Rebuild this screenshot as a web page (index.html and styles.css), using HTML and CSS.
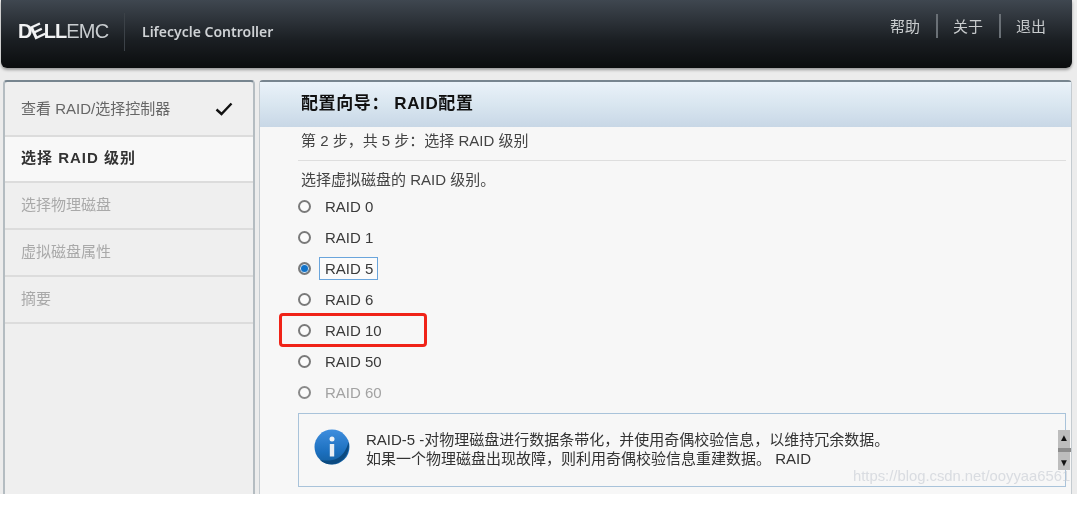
FILE: index.html
```html
<!DOCTYPE html>
<html lang="zh">
<head>
  <meta charset="UTF-8" />
  <title>Lifecycle Controller</title>
  <link rel="stylesheet" href="styles.css">
</head>
<body>
  <div class="screen">
    <header class="topbar">
      <div class="brand">
        <span class="logo"><b>D<i>E</i>LL</b>EMC</span>
        <span class="product">Lifecycle Controller</span>
      </div>
      <nav class="toplinks">
        <a>帮助</a>
        <a>关于</a>
        <a>退出</a>
      </nav>
    </header>

    <div class="main">
      <aside class="sidebar">
        <div class="step done">
          <span>查看 RAID/选择控制器</span>
          <svg class="check" width="18" height="14" viewBox="0 0 18 14"><path d="M1.5 7.5 L6.5 12 L16.5 1.5" fill="none" stroke="#111" stroke-width="2.4"/></svg>
        </div>
        <div class="step current">选择 RAID 级别</div>
        <div class="step">选择物理磁盘</div>
        <div class="step">虚拟磁盘属性</div>
        <div class="step">摘要</div>
      </aside>

      <section class="content">
        <h1 class="title">配置向导： RAID配置</h1>
        <p class="substep">第 2 步，共 5 步：选择 RAID 级别</p>
        <div class="body">
          <p class="prompt">选择虚拟磁盘的 RAID 级别。</p>
          <ul class="levels">
            <li><span class="radio"></span><span class="label">RAID 0</span></li>
            <li><span class="radio"></span><span class="label">RAID 1</span></li>
            <li><span class="radio on"></span><span class="label focus">RAID 5</span></li>
            <li><span class="radio"></span><span class="label">RAID 6</span></li>
            <li class="marked"><span class="radio"></span><span class="label">RAID 10</span></li>
            <li><span class="radio"></span><span class="label">RAID 50</span></li>
            <li class="disabled"><span class="radio"></span><span class="label">RAID 60</span></li>
          </ul>
          <div class="info">
            <svg class="info-icon" width="36" height="36" viewBox="0 0 36 36">
              <defs>
                <linearGradient id="ball" x1="0" y1="0" x2="0" y2="1">
                  <stop offset="0" stop-color="#3f8ede"/>
                  <stop offset="0.65" stop-color="#1b6fbe"/>
                  <stop offset="1" stop-color="#155f9f"/>
                </linearGradient>
              </defs>
              <circle cx="18" cy="18" r="17.5" fill="url(#ball)"/>
              <path d="M24 29 C29 26 33 20 34.5 13 C36.5 22 31 33 20 35 C14 36 9 34 6 31 C12 32 19 32 24 29Z" fill="#0b4a80"/>
              <circle cx="18" cy="10" r="2.5" fill="#f0f3f6"/>
              <rect x="15.8" y="15" width="4.4" height="12.5" fill="#e8eef4"/>
            </svg>
            <div class="info-text">
              <p>RAID-5 -对物理磁盘进行数据条带化，并使用奇偶校验信息，以维持冗余数据。</p>
              <p>如果一个物理磁盘出现故障，则利用奇偶校验信息重建数据。 RAID</p>
            </div>
            <div class="scroller">
              <span class="arrow">▲</span>
              <span class="grip"></span>
              <span class="arrow">▼</span>
            </div>
          </div>
        </div>
      </section>
    </div>
    <span class="watermark">https://blog.csdn.net/ooyyaa6561</span>
  </div>
</body>
</html>
```

FILE: styles.css
```css
* {
  box-sizing: border-box;
}

body {
  margin: 0;
  background-color: #fff;
  font-family: "Liberation Sans", "Noto Sans CJK SC", sans-serif;
  font-size: 15px;
  color: #333;
}

.screen {
  position: relative;
  width: 1077px;
  height: 494px;
  background-color: #ececec;
  overflow: hidden;
  filter: blur(0.45px);
}

.topbar {
  height: 68px;
  margin: 0 5px 0 1px;
  padding: 0 26px 0 17px;
  display: flex;
  justify-content: space-between;
  border-radius: 0 0 6px 6px;
  background: linear-gradient(#3f4750, #30363d 25%, #1a1e22 60%, #0b0d0e);
  box-shadow: 0 2px 3px rgba(0, 0, 0, 0.35);
}

.brand {
  display: flex;
  align-items: center;
  height: 63px;
}

.logo {
  width: 106px;
  font-size: 20px;
  letter-spacing: -0.75px;
  color: #c9cdd0;
}

.logo b {
  color: #f2f3f4;
  letter-spacing: -1px;
}

.logo i {
  display: inline-block;
  font-style: normal;
  transform: rotate(-25deg);
}

.product {
  height: 38px;
  line-height: 38px;
  padding-left: 17px;
  border-left: 1px solid #3c4248;
  font-family: "Noto Sans", sans-serif;
  font-size: 14px;
  font-weight: 600;
  color: #cfd2d5;
}

.toplinks {
  display: flex;
  align-items: flex-start;
  padding-top: 14px;
}

.toplinks a {
  height: 24px;
  line-height: 26px;
  padding: 0 16px 0 15px;
  border-left: 2px solid #6a7076;
  font-size: 15px;
  color: #c9ccce;
}

.toplinks a:first-child {
  border-left: none;
}

.toplinks a:last-child {
  padding-right: 0;
}

.main {
  display: flex;
  gap: 4px;
  height: 426px;
  padding: 12px 5px 0 3px;
}

.sidebar {
  width: 252px;
  border: 2px solid #b4bcc1;
  border-top-color: #77858f;
  border-bottom: none;
  border-radius: 4px 4px 0 0;
  background-color: #efefef;
}

.step {
  display: flex;
  align-items: center;
  height: 47px;
  padding: 0 0 5px 16px;
  border-bottom: 2px solid #dcdcdc;
  color: #a9a9a9;
}

.step.done {
  justify-content: space-between;
  height: 55px;
  padding: 0 20px 2px 16px;
  color: #666;
}

.check {
  margin-top: 3px;
}

.step.current {
  height: 46px;
  padding-bottom: 6px;
  background-color: #f8f8f8;
  font-weight: bold;
  letter-spacing: 1px;
  color: #333;
}

.content {
  flex: 1;
  border: 1px solid #c4cbd0;
  border-top: 2px solid #77858f;
  border-bottom: none;
  border-radius: 4px 4px 0 0;
  background-color: #f7f7f7;
}

.title {
  height: 45px;
  margin: 0;
  padding-left: 41px;
  font-size: 17px;
  letter-spacing: 0.6px;
  line-height: 43px;
  color: #111;
  background: linear-gradient(#eaf2f9, #d9e6f0 50%, #c8d7e6);
}

.substep {
  height: 34px;
  margin: 0 5px 0 38px;
  padding: 5px 0 0 3px;
  line-height: 17px;
  border-bottom: 1px solid #dedede;
  color: #444;
}

.body {
  padding: 10px 5px 0 38px;
}

.prompt {
  margin: 0 0 0 3px;
  line-height: 18px;
  color: #444;
}

.levels {
  list-style: none;
  margin: 2px 0 0;
  padding: 0;
}

.levels li {
  display: flex;
  align-items: center;
  height: 31px;
  color: #3a3a3a;
}

.radio {
  width: 13px;
  height: 13px;
  border: 2px solid #7a7a7a;
  border-radius: 50%;
  background-color: #fbfbfb;
}

.radio.on {
  background-color: #1273c9;
  box-shadow: inset 0 0 0 1px #dfe8ef;
}

.label {
  margin-left: 8px;
  padding: 2px 0 2px 5px;
  border: 1px solid transparent;
}

.label.focus {
  padding-right: 4px;
  border-color: #6aa5dc;
  background-color: #fbfbfb;
}

.levels li.marked {
  position: relative;
}

/* red box drawn over the row */
.levels li.marked::before {
  content: "";
  box-sizing: border-box;
  position: absolute;
  left: -19px;
  top: -2px;
  width: 148px;
  height: 34px;
  border: 3px solid #f02318;
  border-radius: 4px;
}

.levels li.disabled {
  color: #a2a2a2;
}

.levels li.disabled .radio {
  border-color: #8a8a8a;
}

.info {
  display: flex;
  height: 74px;
  margin-top: 5px;
  border: 1px solid #a9c3da;
  position: relative;
}

.info-icon {
  flex: none;
  margin: 15px 0 0 15px;
}

.info-text {
  padding: 16px 0 0 16px;
  color: #333;
}

.info-text p {
  margin: 0;
  line-height: 19px;
}

.scroller {
  position: absolute;
  right: -5px;
  top: 16px;
  width: 12px;
  height: 40px;
  display: flex;
  flex-direction: column;
  justify-content: space-between;
  align-items: center;
  background-color: #bdbdbd;
}

.arrow {
  font-size: 10px;
  line-height: 15px;
  color: #111;
}

.grip {
  width: 13px;
  height: 4px;
  background-color: #8c8c8c;
}

.watermark {
  position: absolute;
  left: 853px;
  top: 468px;
  font-size: 14.8px;
  white-space: nowrap;
  color: rgba(196, 202, 210, 0.6);
}
```
